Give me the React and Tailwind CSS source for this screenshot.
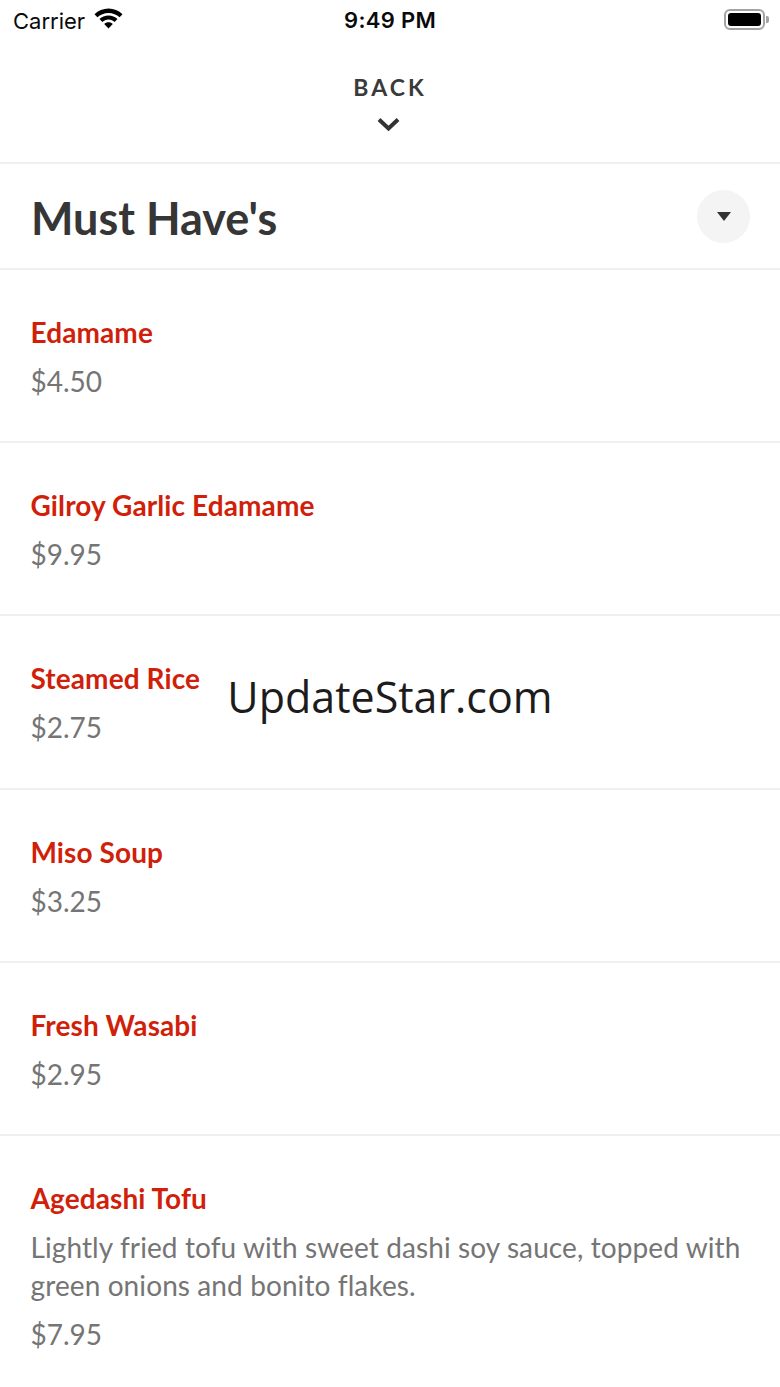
import React from "react";

const items = [
  { name: "Edamame", price: "$4.50" },
  { name: "Gilroy Garlic Edamame", price: "$9.95" },
  { name: "Steamed Rice", price: "$2.75" },
  { name: "Miso Soup", price: "$3.25" },
  { name: "Fresh Wasabi", price: "$2.95" },
  {
    name: "Agedashi Tofu",
    desc: "Lightly fried tofu with sweet dashi soy sauce, topped with green onions and bonito flakes.",
    price: "$7.95",
  },
];

const StatusBar = () => (
  <div className="h-[40px] flex items-center justify-between relative font-['Inter',sans-serif] text-[#0a0a0a]">
    <div className="flex items-center pl-[13px] pt-[1px]">
      <span className="text-[22px] leading-[24px]">Carrier</span>
      <svg className="ml-[9px] mb-[5px]" width="29" height="21" viewBox="0 0 29 21" fill="#000">
        <path d="M14.5 .5C9.200 .5 4.200 2.600 .5 6.200l2.900 3C6.300 6.500 10.200 4.900 14.500 4.900s8.200 1.600 11.100 4.300l2.900-3C24.800 2.600 19.800 .5 14.500 .5z" />
        <path d="M14.500 7.400c-3.500 0-6.700 1.400-9 3.600l2.900 3c1.600-1.500 3.700-2.400 6.100-2.400s4.500.9 6.100 2.400l2.900-3c-2.300-2.200-5.500-3.600-9-3.600z" />
        <path d="M14.500 14.200c-1.700 0-3.200.7-4.300 1.700l4.300 4.600 4.300-4.600c-1.100-1-2.600-1.700-4.300-1.700z" />
      </svg>
    </div>
    <span className="absolute left-0 right-0 text-center text-[22px] leading-[24px] font-semibold tracking-[0.3px]">9:49 PM</span>
    <div className="flex items-center pr-[11px] pb-[2px]">
      <div className="w-[41px] h-[21px] rounded-[6px] border-2 border-[#a3a3a3] p-[2px]">
        <div className="w-full h-full rounded-[3px] bg-black" />
      </div>
      <div className="w-[3px] h-[7px] ml-[1px] rounded-r-[2px] bg-[#a3a3a3]" />
    </div>
  </div>
);

const MenuItem = ({ item }) => (
  <div className="pl-[30.5px] pr-[30px] pt-[45px] pb-[41.2px] border-b-2 border-[#f0f0f0] last:border-b-0">
    <div className="text-[28px] leading-[34px] font-bold text-[#d01f0b] tracking-[0.1px]">{item.name}</div>
    {item.desc && (
      <div className="mt-[13px] text-[28px] leading-[38px] text-[#757575] tracking-[0.1px]">{item.desc}</div>
    )}
    <div className={`${item.desc ? "mt-[11px]" : "mt-[13px]"} text-[28px] leading-[38px] text-[#757575]`}>{item.price}</div>
  </div>
);

export default function App() {
  return (
    <div className="relative w-[780px] h-[1387px] overflow-hidden bg-white font-['Lato',sans-serif]">
      <StatusBar />
      <div className="h-[124px] flex flex-col items-center border-b-2 border-[#f0f0f0]">
        <span className="mt-[33px] text-[23px] leading-[28px] font-bold tracking-[3px] text-[#3a3a3a]">BACK</span>
        <svg className="mt-[16px] mr-[3px]" width="23" height="15" viewBox="0 0 23 15" fill="none">
          <path d="M2 2.500l9.500 9 9.500-9" stroke="#333" strokeWidth="4" />
        </svg>
      </div>
      <div className="h-[106px] flex items-center justify-between pl-[31px] pr-[30px] border-b-2 border-[#f0f0f0]">
        <h1 className="text-[45px] leading-[56px] mt-[4px] font-bold text-[#363636]">Must Have's</h1>
        <div className="w-[53px] h-[53px] rounded-full bg-[#f4f4f4] flex items-center justify-center">
          <svg className="mt-[1px]" width="14" height="9" viewBox="0 0 14 9" fill="#333">
            <path d="M0 0h14L7 9z" />
          </svg>
        </div>
      </div>
      {items.map((item) => (
        <MenuItem key={item.name} item={item} />
      ))}
      <div className="absolute left-0 right-0 top-[668px] text-center text-[43px] leading-[58px] text-[#1c1c1c] font-['Open_Sans',sans-serif]">
        UpdateStar.com
      </div>
    </div>
  );
}
